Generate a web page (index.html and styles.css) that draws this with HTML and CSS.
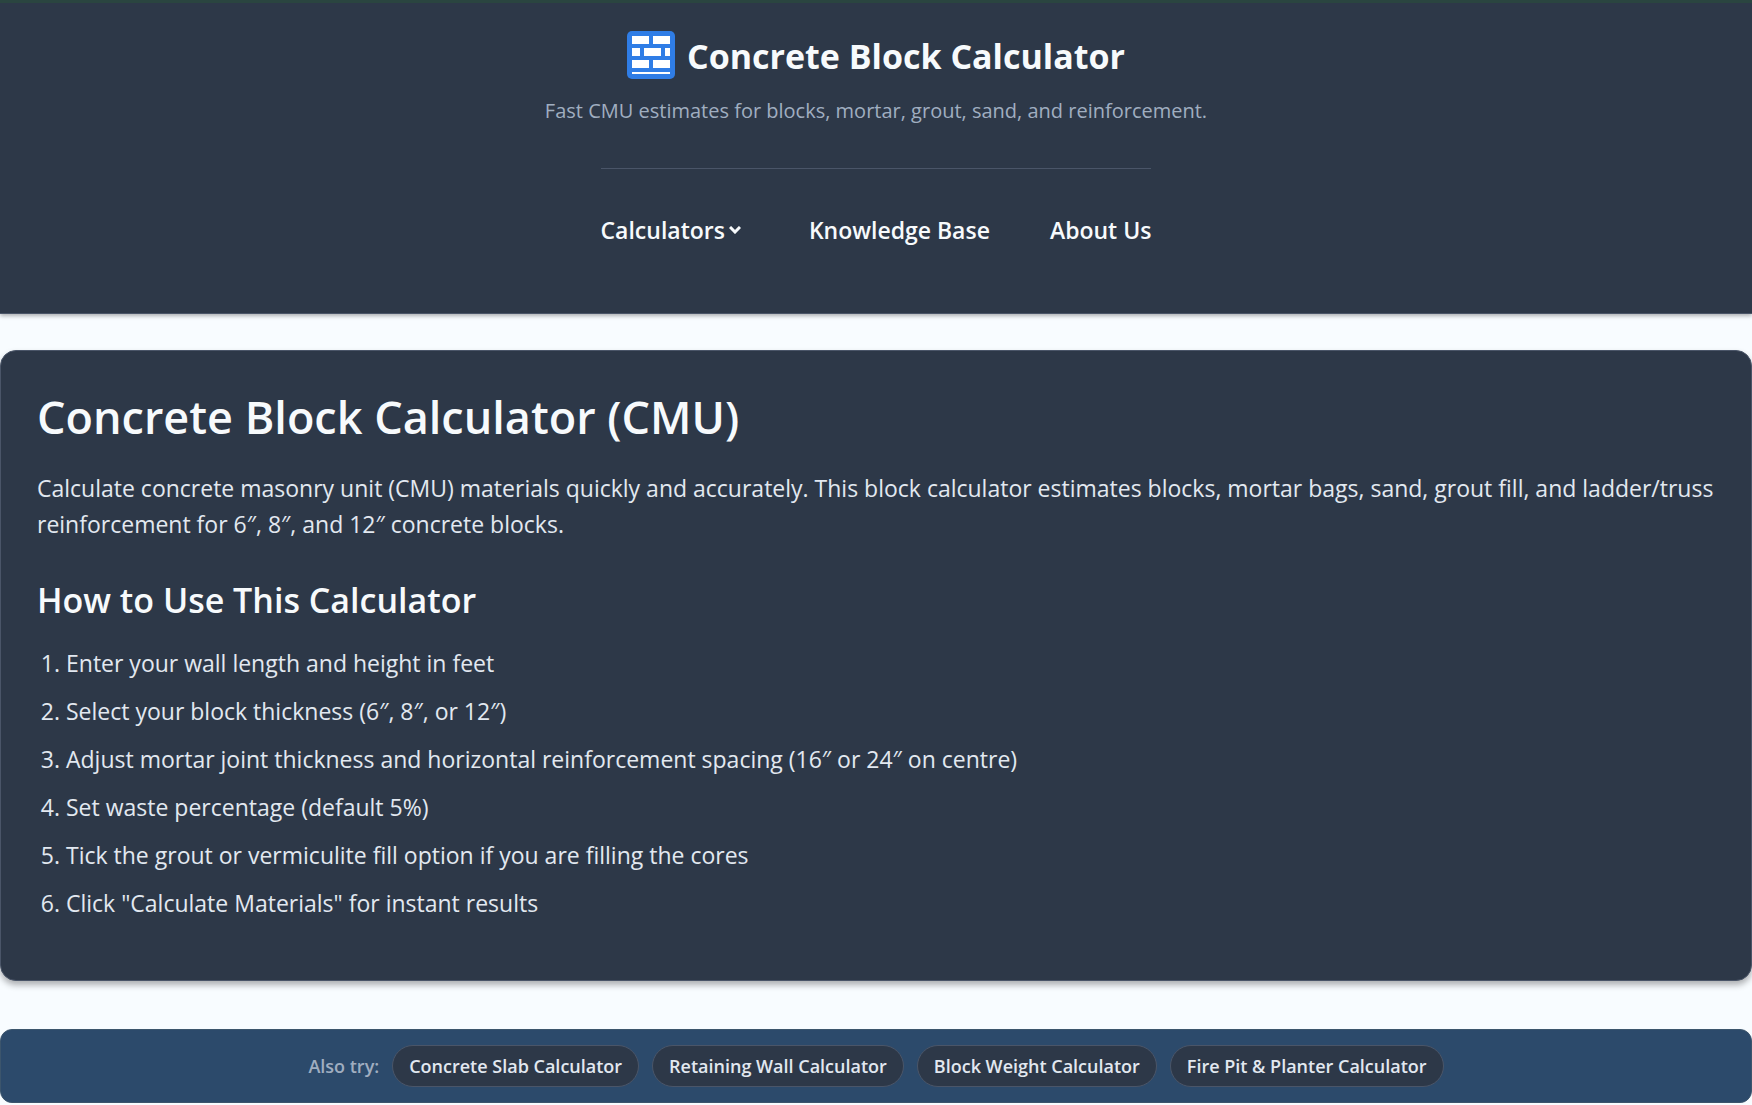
FILE: index.html
```html
<!DOCTYPE html>
<html lang="en">
<head>
<meta charset="UTF-8">
<meta name="viewport" content="width=device-width, initial-scale=1">
<title>Concrete Block Calculator</title>
<link rel="stylesheet" href="styles.css">
</head>
<body>
<header class="site-header">
  <a class="brand" href="#">
    <svg class="logo" viewBox="0 0 48 48" aria-hidden="true">
      <rect width="48" height="48" rx="5" fill="#2f7de6"/>
      <g fill="#fff">
        <rect x="5" y="5" width="17" height="8"/>
        <rect x="26" y="5" width="17" height="8"/>
        <rect x="5" y="17" width="8" height="8"/>
        <rect x="17" y="17" width="17" height="8"/>
        <rect x="38" y="17" width="5" height="8"/>
        <rect x="5" y="29" width="17" height="8"/>
        <rect x="26" y="29" width="17" height="8"/>
        <rect x="5" y="41" width="38" height="2"/>
      </g>
    </svg>
    <span class="brand-name">Concrete Block Calculator</span>
  </a>
  <p class="tagline">Fast CMU estimates for blocks, mortar, grout, sand, and reinforcement.</p>
  <nav class="main-nav">
    <button type="button" class="nav-link nav-toggle">Calculators
      <svg class="caret" viewBox="0 0 12 8" aria-hidden="true"><path d="M1 1l5 5 5-5" fill="none" stroke="currentColor" stroke-width="3"/></svg>
    </button>
    <a class="nav-link" href="#">Knowledge Base</a>
    <a class="nav-link" href="#">About Us</a>
  </nav>
</header>

<main>
  <section class="card">
    <h1>Concrete Block Calculator (CMU)</h1>
    <p class="intro">Calculate concrete masonry unit (CMU) materials quickly and accurately. This block calculator estimates blocks, mortar bags, sand, grout fill, and ladder/truss reinforcement for 6″, 8″, and 12″ concrete blocks.</p>
    <h2>How to Use This Calculator</h2>
    <ol class="steps">
      <li>Enter your wall length and height in feet</li>
      <li>Select your block thickness (6″, 8″, or 12″)</li>
      <li>Adjust mortar joint thickness and horizontal reinforcement spacing (16″ or 24″ on centre)</li>
      <li>Set waste percentage (default 5%)</li>
      <li>Tick the grout or vermiculite fill option if you are filling the cores</li>
      <li>Click "Calculate Materials" for instant results</li>
    </ol>
  </section>

  <nav class="also-try">
    <span class="also-label">Also try:</span>
    <a class="pill" href="#">Concrete Slab Calculator</a>
    <a class="pill" href="#">Retaining Wall Calculator</a>
    <a class="pill" href="#">Block Weight Calculator</a>
    <a class="pill" href="#">Fire Pit &amp; Planter Calculator</a>
  </nav>
</main>
</body>
</html>
```
FILE: styles.css
```css
* {
  box-sizing: border-box;
}
body {
  margin: 0;
  background-color: #f8fcff;
  color: #e2e8f0;
  font-family: 'Segoe UI', 'Open Sans', sans-serif;
  font-size: 23px;
  line-height: 36px;
}

/* Header */
.site-header {
  display: flex;
  flex-direction: column;
  align-items: center;
  padding: 28px 16px 65px;
  background-color: #2d3848;
  border-top: 3px solid #2a4540;
  border-bottom: 1px solid #4a5568;
  box-shadow: 0 2px 4px rgba(0, 0, 0, 0.3);
}
.brand {
  display: flex;
  align-items: flex-start;
  gap: 12px;
  color: #f7fafc;
  text-decoration: none;
}
.logo {
  width: 48px;
  height: 48px;
}
.brand-name {
  font-size: 34px;
  font-weight: 700;
  line-height: 50px;
}
.tagline {
  margin: 12px 0 39px;
  color: #a0aec0;
  font-size: 20px;
}
.main-nav {
  display: flex;
  align-items: center;
  gap: 60px;
  padding-top: 43px;
  border-top: 1px solid #4a5568;
}
.nav-link {
  color: #f7fafc;
  font-family: inherit;
  font-size: 23px;
  font-weight: 600;
  line-height: 36px;
  text-decoration: none;
}
.nav-toggle {
  display: flex;
  align-items: center;
  gap: 4px;
  margin: 0;
  padding: 0 8px 0 0;
  border: 0;
  background: none;
  cursor: pointer;
}
.caret {
  width: 12px;
  height: 8px;
}

/* Intro card */
.card {
  margin: 36px 0 48px;
  padding: 36px 36px 47px;
  background-color: #2d3848;
  border: 1px solid #4a5568;
  border-radius: 16px;
  box-shadow: 0 4px 6px rgba(0, 0, 0, 0.3);
}
.card h1 {
  margin: 0 0 23px;
  color: #f7fafc;
  font-size: 45px;
  font-weight: 600;
  line-height: 60px;
}
.intro {
  margin: 0 0 34px;
}
.card h2 {
  margin: 0 0 21px;
  color: #f7fafc;
  font-size: 34px;
  font-weight: 600;
  line-height: 48px;
}
.steps {
  margin: 0;
  padding: 0 0 0 29px;
}
.steps li {
  margin-bottom: 12px;
}

/* Related calculators */
.also-try {
  display: flex;
  flex-wrap: wrap;
  justify-content: center;
  align-items: center;
  gap: 13px;
  padding: 15px;
  background-color: #2c4a6b;
  border: 1px solid #3c556c;
  border-radius: 12px;
  font-size: 18px;
  font-weight: 600;
  line-height: 26px;
}
.also-label {
  color: #a0aec0;
}
.pill {
  padding: 7px 16px;
  border: 1px solid #4a5568;
  border-radius: 21px;
  background-color: #2d3848;
  color: #e2e8f0;
  text-decoration: none;
}
```
